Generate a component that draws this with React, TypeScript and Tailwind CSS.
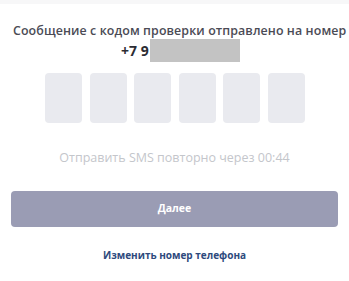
import React from 'react'

export default function App() {
  const cells = [0, 1, 2, 3, 4, 5]
  return (
    <div className="w-[349px] h-[281px] bg-white font-['Open_Sans',sans-serif] overflow-hidden">
      <div className="h-[4px] bg-[#f7f7f8]" />
      <div className="pt-[19px] pl-[13px] text-left text-[12.4px] font-semibold leading-[16px] text-[#4b4b55] tracking-[0.1px] whitespace-nowrap">
        Сообщение с кодом проверки отправлено на номер
      </div>
      <div className="flex items-center h-[23px] mt-[0px] pl-[121px]">
        <span className="text-[14px] font-bold text-[#2c2c33] leading-none">+7 9</span>
        <span className="ml-[1px] w-[90px] h-[23px] bg-[#c3c3c3]" />
      </div>
      <div className="flex gap-[7.5px] pl-[45px] mt-[11px]">
        {cells.map((i) => (
          <div key={i} className="w-[37px] h-[50px] rounded-[4px] bg-[#e9eaef]" />
        ))}
      </div>
      <div className="mt-[28px] text-center text-[12.5px] leading-[14px] text-[#c4c6cb]">
        Отправить SMS повторно через 00:44
      </div>
      <div className="mx-[11px] mt-[26px] h-[36px] rounded-[4px] bg-[#9a9cb4] flex items-center justify-center text-white text-[10.5px] font-bold">
        Далее
      </div>
      <div className="mt-[21px] text-center text-[10px] font-bold leading-[14px] text-[#2e4a7d]">
        Изменить номер телефона
      </div>
    </div>
  )
}
